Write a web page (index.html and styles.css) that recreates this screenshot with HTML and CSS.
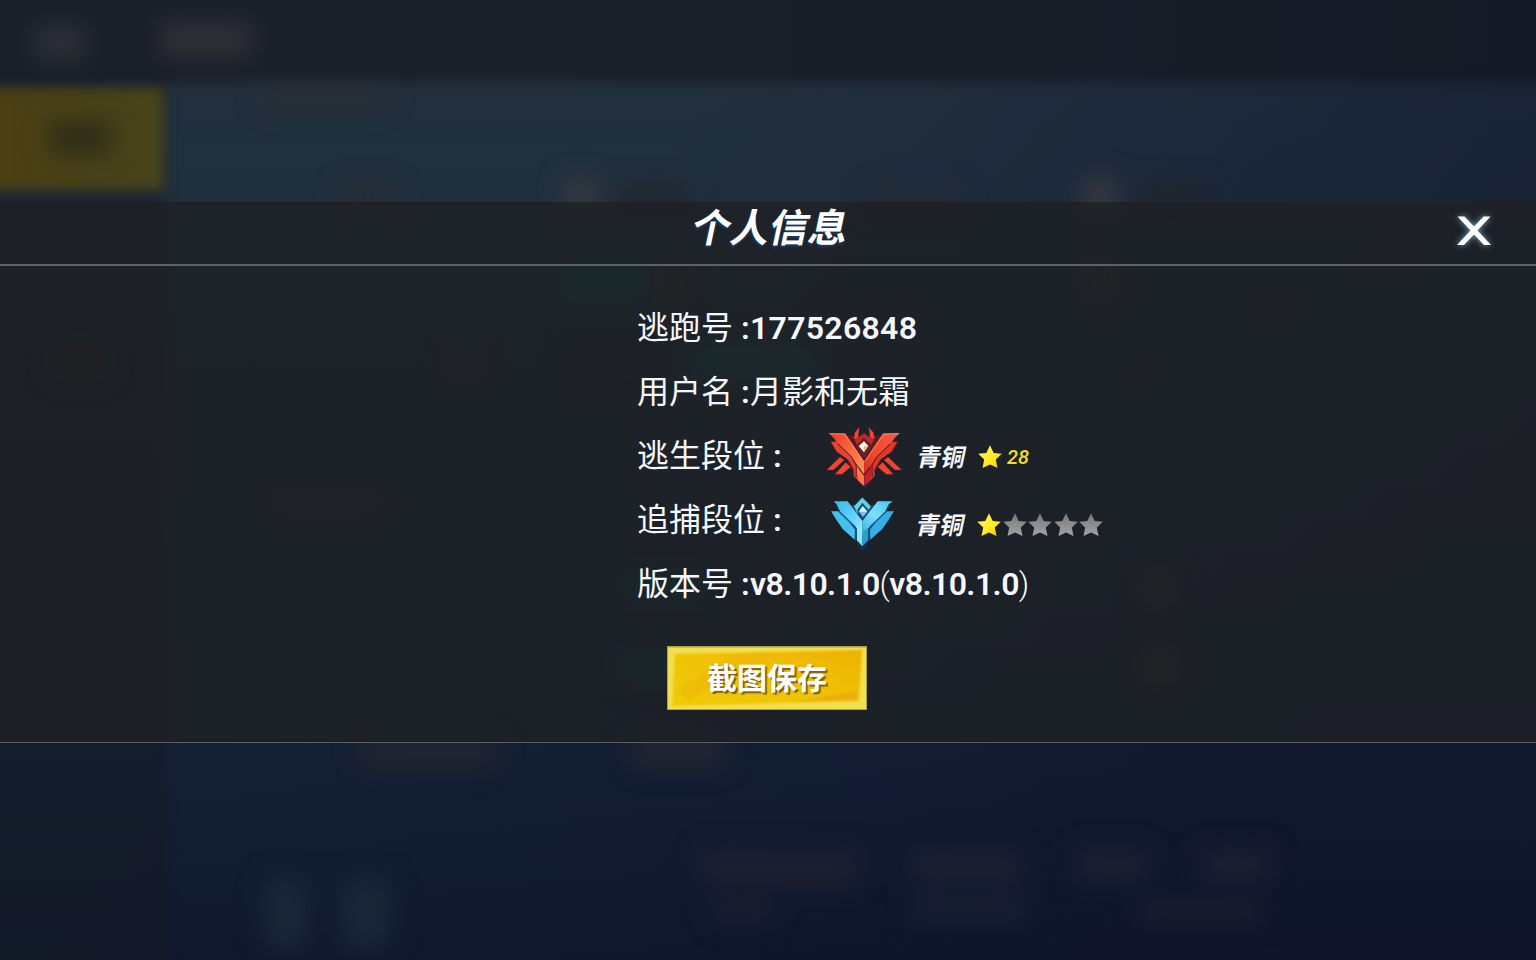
FILE: index.html
```html
<!DOCTYPE html>
<html lang="zh-CN">
<head>
<meta charset="utf-8">
<title>个人信息</title>
<link rel="stylesheet" href="styles.css">
</head>
<body>
<svg class="backdrop" viewBox="0 0 1536 960" aria-hidden="true">
  <defs>
    <linearGradient id="bgMain" x1="0" y1="0" x2="0" y2="1">
      <stop offset="0" stop-color="#22303c"/><stop offset=".22" stop-color="#202f3e"/><stop offset=".5" stop-color="#1b293a"/><stop offset=".8" stop-color="#142033"/><stop offset="1" stop-color="#10192b"/>
    </linearGradient>
    <linearGradient id="bgRight" x1="0" y1="0" x2="1" y2=".5">
      <stop offset=".4" stop-color="#101432" stop-opacity="0"/><stop offset="1" stop-color="#0e1028" stop-opacity=".5"/>
    </linearGradient>
    <linearGradient id="bgTop" x1="0" y1="0" x2="1" y2="0">
      <stop offset="0" stop-color="#1a1f2a"/><stop offset=".35" stop-color="#1a2029"/><stop offset="1" stop-color="#141a25"/>
    </linearGradient>
    <linearGradient id="tab" x1="0" y1="0" x2="1" y2="0">
      <stop offset="0" stop-color="#4d3e12"/><stop offset="1" stop-color="#47451b"/>
    </linearGradient>
  </defs>
  <rect width="1536" height="960" fill="url(#bgMain)"/>
  <rect class="blur-edge" x="-40" y="60" width="205" height="940" fill="#15171f" opacity=".38"/>
  <rect width="1536" height="960" fill="url(#bgRight)"/>
  <rect class="blur-edge" x="-40" y="-40" width="1620" height="122" fill="url(#bgTop)"/>
  <rect class="blur-edge" x="-40" y="88" width="204" height="102" fill="url(#tab)"/>
  <g class="blur-shapes">
    <rect x="50" y="122" width="60" height="32" fill="#2c2b18"/>
    <rect x="34" y="26" width="52" height="34" fill="#2d3036"/>
    <rect x="160" y="22" width="92" height="34" fill="#303136"/>
    <rect x="262" y="86" width="124" height="22" fill="#2a2d33"/>
    <rect x="564" y="180" width="32" height="32" fill="#383a40"/>
    <rect x="616" y="184" width="72" height="26" fill="#20272e"/>
    <rect x="340" y="186" width="56" height="20" fill="#272d34"/>
    <rect x="870" y="188" width="90" height="24" fill="#242c34"/>
    <rect x="1082" y="178" width="36" height="40" fill="#36393f"/>
    <rect x="1140" y="184" width="64" height="28" fill="#22262d"/>
    <rect x="560" y="262" width="86" height="42" fill="#0c514c"/>
    <rect x="660" y="264" width="22" height="36" fill="#3e3e2a"/>
    <rect x="1084" y="262" width="30" height="38" fill="#39382c"/>
    <rect x="690" y="342" width="130" height="40" fill="#0c4b47"/>
    <rect x="570" y="342" width="90" height="40" fill="#1f2229"/>
    <rect x="450" y="346" width="28" height="32" fill="#2b322f"/>
    <rect x="54" y="344" width="52" height="32" fill="#302724"/>
    <rect x="264" y="490" width="120" height="24" fill="#2c2f2d"/>
    <rect x="620" y="570" width="90" height="32" fill="#0b4543"/>
    <rect x="614" y="650" width="74" height="32" fill="#0b4543"/>
    <rect x="1140" y="570" width="36" height="34" fill="#34362a"/>
    <rect x="1140" y="650" width="36" height="34" fill="#34362a"/>
    <rect x="360" y="738" width="136" height="28" fill="#242631"/>
    <rect x="632" y="738" width="92" height="28" fill="#242832"/>
    <rect x="264" y="878" width="44" height="70" fill="#1b2737"/>
    <rect x="342" y="878" width="48" height="70" fill="#1b2737"/>
    <rect x="700" y="850" width="160" height="34" fill="#1d2130"/>
    <rect x="912" y="850" width="110" height="34" fill="#1b2130"/>
    <rect x="1074" y="850" width="76" height="30" fill="#1b2130"/>
    <rect x="1200" y="850" width="72" height="30" fill="#1b2130"/>
    <rect x="712" y="900" width="60" height="22" fill="#1a1f2e"/>
    <rect x="912" y="900" width="116" height="22" fill="#192030"/>
    <rect x="1136" y="900" width="130" height="22" fill="#191f2d"/>
  </g>
</svg>

<main class="dialog">
  <header class="dialog-head">
    <h1 class="title">个人信息</h1>
    <button class="close" aria-label="关闭">
      <svg viewBox="0 0 36 32" width="36" height="32"><path d="M1.500 1.500H8.500L18 11.500L27.500 1.500H34.500L21.500 15.500L35 30H28L18 19.500L8 30H1L14.500 15.500Z" fill="#fff"/></svg>
    </button>
  </header>

  <section class="info">
    <div class="row"><span class="label">逃跑号 <span class="colon">:</span></span><span class="value id">177526848</span></div>
    <div class="row"><span class="label">用户名 <span class="colon">:</span></span><span class="value">月影和无霜</span></div>
    <div class="row">
      <span class="label wide">逃生段位 <span class="colon">:</span></span>
      <svg class="badge" viewBox="0 0 300 210" width="100" height="70">
        <defs>
          <linearGradient id="r1" x1="0" y1="0" x2="1" y2="1"><stop offset="0" stop-color="#e9372c"/><stop offset=".55" stop-color="#fa6c3c"/><stop offset="1" stop-color="#ff9a58"/></linearGradient>
          <linearGradient id="r2" x1="1" y1="0" x2="0" y2="1"><stop offset="0" stop-color="#f7564b"/><stop offset=".6" stop-color="#ee4a2c"/><stop offset="1" stop-color="#d02a21"/></linearGradient>
        </defs>
        <path d="M128 180L148 206L168 180Z" fill="#22264f"/>
        <path d="M66 45L230 45L186 145L148 198L108 145Z" fill="#5b1924"/>
        <g fill="#ef4633" stroke="#8b2220" stroke-width="1.500">
          <path d="M133 19L120 34L116 52L129 60L131 38Z"/><path d="M161 19L175 34L179 52L166 60L164 38Z"/>
          <path d="M147 37L119 57L126 72L147 52L169 72L176 57Z" fill="#b72c2a"/>
          <path d="M75 108L35 147L55 147L88 117Z"/><path d="M219 108L260 147L240 147L207 117Z"/>
          <path d="M92 124L60 160L81 160L107 138Z"/><path d="M203 124L235 160L214 160L188 138Z"/>
          <path d="M47 62L65 92L99 116L116 145L116 165L130 180L130 137L111 104L68 62Z" fill="#e84131"/>
          <path d="M248 62L230 92L196 116L179 145L179 165L165 180L165 137L184 104L227 62Z" fill="#df3728"/>
        </g>
        <path d="M41 36L91 37L147 121L147 160L126 130L74 77L58 53Z" fill="url(#r1)"/>
        <path d="M254 36L204 37L147 121L147 160L169 130L221 77L237 53Z" fill="url(#r2)"/>
        <path d="M43 38L89 40L146 122M252 38L206 40L149 122" fill="none" stroke="#ff9876" stroke-width="2"/>
        <path d="M123 133L147 165L147 195L130 179Z" fill="#ff7846"/>
        <path d="M172 133L148 165L148 195L165 179Z" fill="#bf242a"/>
        <path d="M68 68L110 109L124 133L123 168M227 68L185 109L171 133L172 168" fill="none" stroke="#6b2029" stroke-width="3.500"/>
        <path d="M147 51L124 73L148 111L171 73Z" fill="#6b202a"/>
        <path d="M147 61L131 75L147 94L160 75Z" fill="#fff4d7"/><path d="M148 74L158 77L147 92Z" fill="#dfb783"/>
      </svg>
      <span class="tier">青铜</span>
      <svg class="star" viewBox="0 0 24 24"><use href="#gold"/></svg>
      <span class="count">28</span>
    </div>
    <div class="row">
      <span class="label wide">追捕段位 <span class="colon">:</span></span>
      <svg class="badge low" viewBox="0 0 300 195" width="100" height="65">
        <defs>
          <linearGradient id="c1" x1="0" y1="0" x2="1" y2="1"><stop offset="0" stop-color="#36b7ed"/><stop offset=".6" stop-color="#65d5fa"/><stop offset="1" stop-color="#a6f3fb"/></linearGradient>
          <linearGradient id="c2" x1="1" y1="0" x2="0" y2="1"><stop offset="0" stop-color="#47c6f3"/><stop offset=".5" stop-color="#7ce0fa"/><stop offset="1" stop-color="#38afdf"/></linearGradient>
        </defs>
        <path d="M116 148L143 182L169 148Z" fill="#1b2d52"/>
        <path d="M63 45L225 45L187 120L143 168L97 120Z" fill="#17466f"/>
        <path d="M142 22L116 49L127 72L142 46L157 72L168 49Z" fill="#63d5e8" stroke="#1a628a" stroke-width="3"/>
        <path d="M48 64L66 92L83 117L119 149L120 119L99 91L70 64Z" fill="#45bfec"/>
        <path d="M237 64L219 92L202 117L166 149L165 119L186 91L215 64Z" fill="#35b0e6"/>
        <path d="M56 34L98 34L142 93L142 138L120 108L76 65L66 44Z" fill="url(#c1)"/>
        <path d="M233 34L188 34L142 93L142 138L166 108L210 65L220 44Z" fill="url(#c2)"/>
        <path d="M71 64L119 110L124 124L122 150M214 64L166 110L161 124L163 150" fill="none" stroke="#1a5680" stroke-width="3.500"/>
        <path d="M126 113L142 126L142 169L126 151Z" fill="#83ebfa"/><path d="M142 126L159 113L159 151L142 169Z" fill="#28a0cb"/>
        <path d="M142 38L126 61L144 91L163 61Z" fill="#194e83"/>
        <path d="M143 48L132 64L144 80L157 64Z" fill="#d1f6ff"/><path d="M133 65H156L144 79Z" fill="#79b9e5"/>
      </svg>
      <span class="tier low">青铜</span>
      <span class="stars">
        <svg class="star" viewBox="0 0 24 24">
          <defs>
            <linearGradient id="gy" x1="0" y1="0" x2="1" y2="1"><stop offset="0" stop-color="#fff54c"/><stop offset=".55" stop-color="#ffec29"/><stop offset="1" stop-color="#f2c900"/></linearGradient>
            <linearGradient id="gg" x1="0" y1="0" x2="0" y2="1"><stop offset="0" stop-color="#777"/><stop offset="1" stop-color="#a3a3a3"/></linearGradient>
            <path id="gold" d="M12 .2L15.700 7.900L23.800 8.700L17.800 14.600L19.500 22.900L12 19.500L4.500 22.900L6.200 14.600L.2 8.700L8.300 7.900Z" fill="url(#gy)"/>
            <path id="grey" d="M12 .2L15.700 7.900L23.800 8.700L17.800 14.600L19.500 22.900L12 19.500L4.500 22.900L6.200 14.600L.2 8.700L8.300 7.900Z" fill="url(#gg)"/>
          </defs>
          <use href="#gold"/>
        </svg>
        <svg class="star" viewBox="0 0 24 24"><use href="#grey"/></svg>
        <svg class="star" viewBox="0 0 24 24"><use href="#grey"/></svg>
        <svg class="star" viewBox="0 0 24 24"><use href="#grey"/></svg>
        <svg class="star" viewBox="0 0 24 24"><use href="#grey"/></svg>
      </span>
    </div>
    <div class="row"><span class="label">版本号 <span class="colon">:</span></span><span class="value version">v8.10.1.0<span class="paren">(</span>v8.10.1.0<span class="paren">)</span></span></div>
    <button class="save">
      <svg class="save-bg" viewBox="0 0 200 64" aria-hidden="true">
        <defs>
          <linearGradient id="sv" x1="0" y1="1" x2="1" y2="0"><stop offset="0" stop-color="#efcc08"/><stop offset=".5" stop-color="#f0c205"/><stop offset="1" stop-color="#efb102"/></linearGradient>
        </defs>
        <rect width="200" height="64" fill="#a8a04c"/>
        <rect x="1" y="1.500" width="198" height="61.500" fill="#f2df50"/>
        <g class="save-face">
          <path d="M8 8L195 4L192 55L5 60Z" fill="url(#sv)"/>
          <path d="M10 43L35 27L64 10L104 5L92 26L40 43L22 56Z" fill="#f0b30a" opacity=".5"/>
          <path d="M125 56L190 45L189 54Z" fill="#e9a10c" opacity=".55"/>
        </g>
      </svg>
      <span class="save-text">截图保存</span>
    </button>
  </section>
</main>
</body>
</html>
```
FILE: styles.css
```css
* { box-sizing: border-box; }

body {
  margin: 0;
  height: 960px;
  overflow: hidden;
  background: #141c2b;
  color: #f4f7fb;
  font-family: Roboto, "Noto Sans CJK SC", sans-serif;
}

button { border: 0; padding: 0; background: none; color: inherit; font: inherit; }

.backdrop {
  position: absolute;
  inset: 0;
  width: 1536px;
  height: 960px;
  z-index: -1;
}
.blur-edge { filter: blur(6px); }
.blur-shapes { filter: blur(12px); }

.dialog {
  margin-top: 202px;
  height: 541px;
  background: rgba(30, 32, 36, .8);
  border-bottom: 1px solid #5a5f67;
}

.dialog-head {
  display: grid;
  grid-template-columns: 1fr auto 1fr;
  align-items: center;
  height: 64px;
  border-bottom: 2px solid #5d6267;
}

.title {
  grid-column: 2;
  margin: 0 0 16px 7px;
  font: 700 39px/46px "Noto Sans CJK SC", sans-serif;
  color: #fff;
  transform: skewX(-12deg);
  text-shadow: 0 2px 3px #1d3c63;
}

.close {
  justify-self: end;
  height: 32px;
  margin: 0 44px 4px 0;
  filter: drop-shadow(0 0 3px #6fa9c4);
}
.close svg { display: block; }

.info { padding: 30px 0 0 637px; }

.row {
  display: flex;
  align-items: center;
  height: 64px;
  font-size: 32px;
  line-height: 48px;
  white-space: pre;
}

.label { width: 113px; flex: none; }
.label.wide { width: 178px; }
.colon { font-weight: 600; }
.value { font-weight: 400; }
.id { font-weight: 600; letter-spacing: .3px; }
.version { font-weight: 600; letter-spacing: -.57px; }
.paren { font-weight: 300; }

.badge { flex: none; display: block; }
.badge.low { margin-top: 5px; }

.tier {
  width: 62px;
  margin: 0 0 0 3px;
  font: 700 24px/36px "Noto Sans CJK SC", sans-serif;
  transform: skewX(-12deg);
}
.tier.low { margin: 8px 0 0 2px; }

.star { width: 24px; height: 24px; flex: none; display: block; }
.row > .star { margin-top: 2px; margin-left: -2px; }
.stars { display: flex; gap: 1.6px; margin-top: 10px; margin-left: -2px; }

.count {
  margin: 2px 0 0 5px;
  font-size: 20px;
  font-style: italic;
  font-weight: 500;
  color: #f0df28;
}

.save {
  display: grid;
  place-items: center;
  width: 200px;
  height: 64px;
  margin: 30px 0 0 30px;
}
.save-bg, .save-text { grid-area: 1 / 1; }
.save-bg { display: block; width: 200px; height: 64px; }
.save-face { filter: blur(.8px); }
.save-text {
  z-index: 1;
  margin-bottom: 4px;
  font: 700 30px/44px "Noto Sans CJK SC", sans-serif;
  color: #fff;
  text-shadow: 2px 2px 1px #806010;
}
```
